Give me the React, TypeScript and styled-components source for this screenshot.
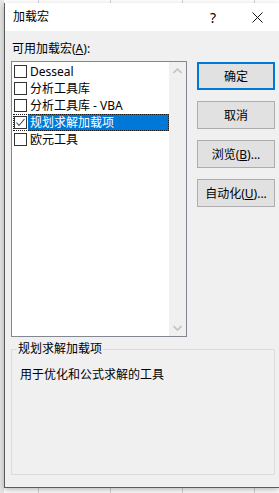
import React from 'react'
import styled, { createGlobalStyle } from 'styled-components'

const Global = createGlobalStyle`
	html, body {
		margin: 0;
		padding: 0;
	}
	body {
		font-family: "Segoe UI", "Noto Sans", "Noto Sans CJK SC", sans-serif;
		font-size: 12px;
		color: #000;
	}
`

const Sheet = styled.div`
	width: 279px;
	height: 493px;
	overflow: hidden;
	box-sizing: border-box;
	padding: 3px 0 0 4px;
	background-color: #fff;
	background-image:
		linear-gradient(90deg, #e6e6e6 0 4px, transparent 4px),
		repeating-linear-gradient(90deg, transparent 0 38px, #d4d4d4 38px 39px, transparent 39px 72px),
		repeating-linear-gradient(180deg, transparent 0 11px, #d4d4d4 11px 12px, transparent 12px 19.3px);
`

const Dialog = styled.div`
	width: 275px;
	height: 485px;
	box-sizing: border-box;
	border-left: 1px solid #5b5b5b;
	border-bottom: 1px solid #5b5b5b;
	background: #f0f0f0;
	box-shadow: 0 2px 6px rgba(0, 0, 0, 0.28);
	display: flex;
	flex-direction: column;
`

const TitleBar = styled.div`
	height: 28px;
	flex: none;
	background: #fff;
	display: flex;
	align-items: center;
	padding-left: 8px;
`

const Title = styled.span`
	font-size: 12px;
	line-height: 16px;
`

const TitleButton = styled.div<{ $w: number }>`
	width: ${p => p.$w}px;
	height: 28px;
	display: flex;
	align-items: center;
	justify-content: center;
	font-size: 14px;
`

const Help = styled(TitleButton)`
	margin-left: auto;
`

const Body = styled.div`
	flex: 1;
	padding: 10px 0 0 6px;
`

const Label = styled.div`
	height: 16px;
	line-height: 16px;
	margin: 0 0 4px 1px;
`

const Main = styled.div`
	display: flex;
	align-items: flex-start;
`

const ListBox = styled.div`
	width: 176px;
	height: 276px;
	box-sizing: border-box;
	border: 1px solid #828790;
	background: #fff;
	display: flex;
`

const Items = styled.div`
	flex: 1;
	padding-top: 1px;
	display: flex;
	flex-direction: column;
`

const Item = styled.div<{ $focus?: boolean }>`
	height: 17px;
	margin-left: 1px;
	padding-left: 1px;
	display: flex;
	align-items: center;
	outline: ${p => (p.$focus ? '1px dotted #1a1a1a' : 'none')};
	outline-offset: -1px;
`

const Box = styled.div`
	width: 13px;
	height: 13px;
	box-sizing: border-box;
	border: 1px solid #333;
	background: #fff;
	flex: none;
	display: flex;
	align-items: center;
	justify-content: center;
`

const ItemText = styled.span<{ $selected?: boolean }>`
	flex: 1;
	align-self: stretch;
	margin-left: 1px;
	padding-left: 2px;
	line-height: 17px;
	white-space: nowrap;
	background: ${p => (p.$selected ? '#0078d7' : 'transparent')};
	color: ${p => (p.$selected ? '#fff' : '#000')};
`

const Scroll = styled.div`
	width: 17px;
	flex: none;
	background: #f0f0f0;
	display: flex;
	flex-direction: column;
	justify-content: space-between;
`

const Arrow = styled.div`
	height: 17px;
	display: flex;
	align-items: center;
	justify-content: center;
`

const Buttons = styled.div`
	margin: 1px 0 0 10px;
	display: flex;
	flex-direction: column;
	gap: 11px;
`

const Button = styled.button<{ $default?: boolean }>`
	width: 78px;
	height: 28px;
	box-sizing: border-box;
	padding: 0;
	font: inherit;
	color: #000;
	background: #e1e1e1;
	border: ${p => (p.$default ? '2px solid #0078d7' : '1px solid #adadad')};
`

const Group = styled.fieldset`
	margin: 4px 0 0 0;
	width: 264px;
	height: 134px;
	box-sizing: border-box;
	border: 1px solid #dcdcdc;
	padding: 10px 8px 0 8px;
`

const Legend = styled.legend`
	padding: 0 1px;
	margin-left: -3px;
	line-height: 16px;
`

const Desc = styled.div`
	line-height: 16px;
`

const Chevron = ({ up }: { up?: boolean }) => (
	<svg width="9" height="6" viewBox="0 0 9 6">
		<polyline
			points={up ? '0.5,5 4.5,1 8.5,5' : '0.5,1 4.5,5 8.5,1'}
			fill="none"
			stroke="#c2c2c2"
			strokeWidth="1.6"
		/>
	</svg>
)

const Check = () => (
	<svg width="11" height="11" viewBox="0 0 11 11">
		<polyline points="1.5,5.5 4,8.5 9.5,2" fill="none" stroke="#444" strokeWidth="1.1" />
	</svg>
)

const addins = [
	{ name: 'Desseal', checked: false },
	{ name: '分析工具库', checked: false },
	{ name: '分析工具库 - VBA', checked: false },
	{ name: '规划求解加载项', checked: true, selected: true },
	{ name: '欧元工具', checked: false },
]

export default function App() {
	return (
		<>
			<Global />
			<Sheet>
				<Dialog>
					<TitleBar>
						<Title>加载宏</Title>
						<Help $w={46}>?</Help>
						<TitleButton $w={43}>
							<svg width="11" height="11" viewBox="0 0 11 11">
								<path d="M0.5 0.5 L10.5 10.5 M10.5 0.5 L0.5 10.5" stroke="#111" strokeWidth="1" />
							</svg>
						</TitleButton>
					</TitleBar>
					<Body>
						<Label>可用加载宏(<u>A</u>):</Label>
						<Main>
							<ListBox>
								<Items>
									{addins.map(a => (
										<Item key={a.name} $focus={a.selected}>
											<Box>{a.checked && <Check />}</Box>
											<ItemText $selected={a.selected}>{a.name}</ItemText>
										</Item>
									))}
								</Items>
								<Scroll>
									<Arrow><Chevron up /></Arrow>
									<Arrow><Chevron /></Arrow>
								</Scroll>
							</ListBox>
							<Buttons>
								<Button $default>确定</Button>
								<Button>取消</Button>
								<Button>浏览(<u>B</u>)...</Button>
								<Button>自动化(<u>U</u>)...</Button>
							</Buttons>
						</Main>
						<Group>
							<Legend>规划求解加载项</Legend>
							<Desc>用于优化和公式求解的工具</Desc>
						</Group>
					</Body>
				</Dialog>
			</Sheet>
		</>
	)
}
